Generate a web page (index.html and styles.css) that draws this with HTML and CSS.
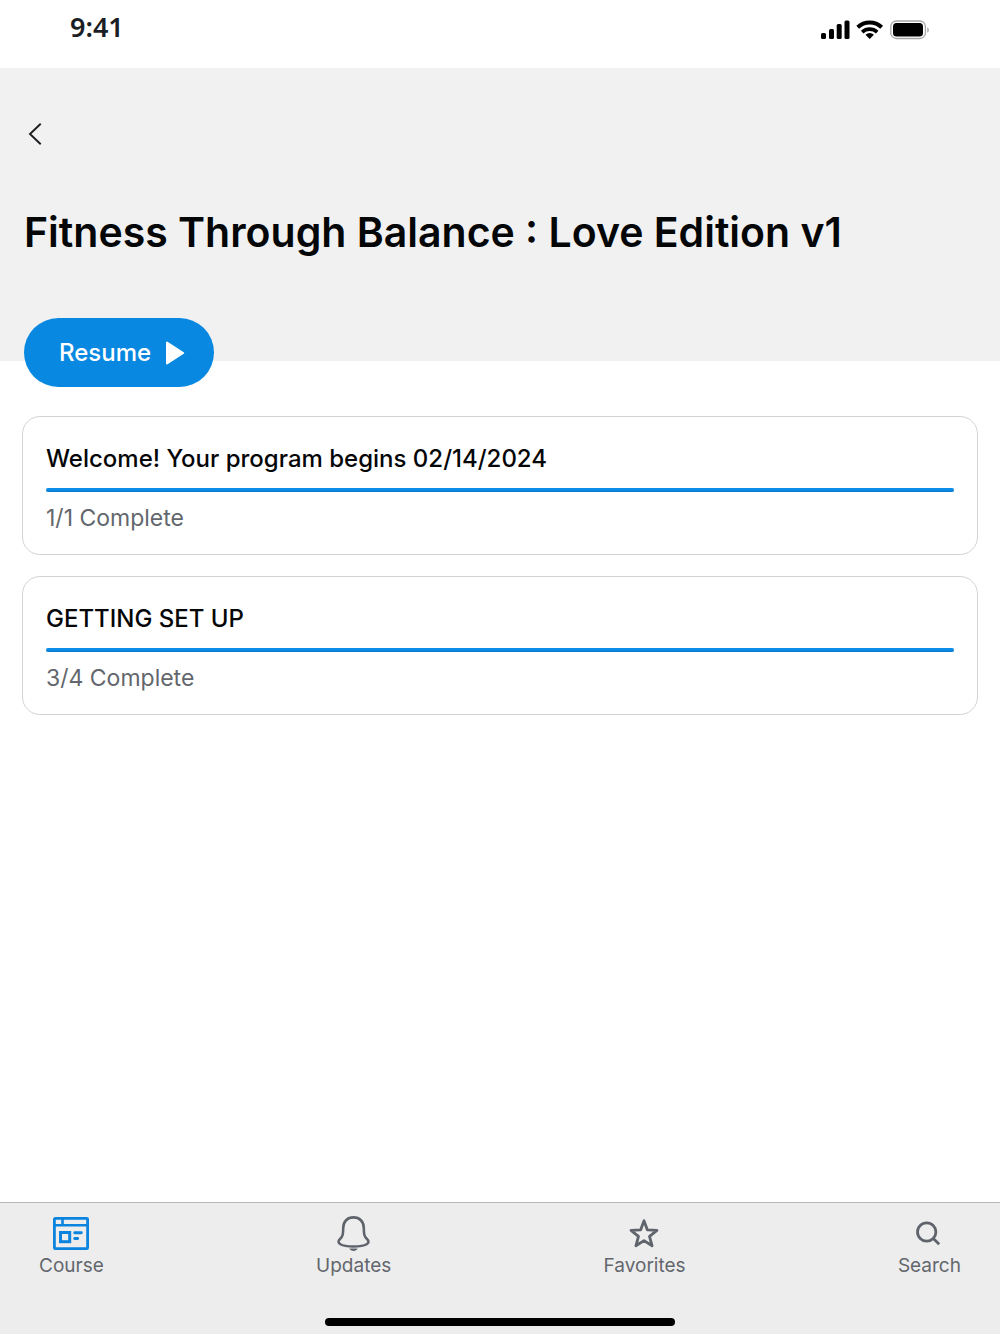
FILE: index.html
```html
<!DOCTYPE html>
<html lang="en">
<head>
<meta charset="utf-8">
<meta name="viewport" content="width=device-width, initial-scale=1">
<title>Fitness Through Balance : Love Edition v1</title>
<link rel="stylesheet" href="styles.css">
</head>
<body>
<div class="status">
  <span class="time">9:41</span>
  <svg class="indicators" width="110" height="20" viewBox="0 0 110 20" aria-hidden="true">
    <rect x="1" y="13" width="5" height="6" rx="1.5"/>
    <rect x="9" y="9" width="5" height="10" rx="1.5"/>
    <rect x="16.700" y="4" width="5" height="15" rx="1.500"/>
    <rect x="24.500" y="0.500" width="5" height="18.500" rx="1.500"/>
    <g fill="none" stroke="#000" stroke-width="4">
      <path d="M37.700 7.300a17.400 17.400 0 0 1 24 0"/>
      <path d="M42.200 12.100a11 11 0 0 1 15 0" stroke-width="3.600"/>
    </g>
    <path d="M49.700 19l-4.200-4.300a6 6 0 0 1 8.400 0z"/>
    <rect x="70.800" y="1" width="34.600" height="17.500" rx="5.500" fill="none" stroke="#a6a6a6" stroke-width="1.300"/>
    <rect x="73" y="3" width="30" height="13.500" rx="3.500"/>
    <path d="M107.300 7.500v5c2-.6 2-4.400 0-5z" fill="#a0a0a0"/>
  </svg>
</div>
<header class="hero">
  <button class="back" type="button" aria-label="Back">
    <svg width="14" height="22" viewBox="0 0 14 22" aria-hidden="true"><path d="M12.700 0.800L2 11l10.700 10.200" fill="none" stroke="#1b1d20" stroke-width="1.900"/></svg>
  </button>
  <h1 class="title">Fitness Through Balance : Love Edition v1</h1>
</header>
<main class="content">
  <button class="resume" type="button">
    <span>Resume</span>
    <svg width="20" height="24" viewBox="0 0 20 24" aria-hidden="true"><path d="M2 1.500v21L18.200 12z" fill="#fff" stroke="#fff" stroke-width="2" stroke-linejoin="round"/></svg>
  </button>
  <section class="card">
    <h2 class="card-title" id="welcome">Welcome! Your program begins 02/14/2024</h2>
    <progress class="bar" value="1" max="1" aria-labelledby="welcome"></progress>
    <p class="count">1/1 Complete</p>
  </section>
  <section class="card">
    <h2 class="card-title" id="setup">GETTING SET UP</h2>
    <progress class="bar" value="1" max="1" aria-labelledby="setup"></progress>
    <p class="count">3/4 Complete</p>
  </section>
</main>
<nav class="tabs">
  <a class="tab" href="#course">
    <svg width="36" height="36" viewBox="0 0 36 36" fill="none" stroke="#0a84de" aria-hidden="true">
      <rect x="1.400" y="3.400" width="33.200" height="30.200" rx="0.800" stroke-width="2.800"/>
      <path d="M1 10.200h34M9.500 3v7" stroke-width="2.600"/>
      <rect x="7.500" y="17.500" width="9.200" height="9.200" stroke-width="3"/>
      <path d="M21.700 17.700h6.600M21.700 23.500h3" stroke-width="2.900" stroke-linecap="round"/>
    </svg>
    <span>Course</span>
  </a>
  <a class="tab" href="#updates">
    <svg width="36" height="36" viewBox="0 0 36 36" aria-hidden="true">
      <path d="M17.500 2.400C11.500 2.400 7.200 6.500 7.200 13c0 6.500-.5 8.500-3.200 11-4.200 4 .7 7.500 13.500 7.500s17.700-3.500 13.500-7.500c-2.700-2.500-3.200-4.500-3.200-11 0-6.500-4.300-10.600-10.300-10.600z" fill="none" stroke="#5f646c" stroke-width="2.600"/>
      <path d="M13.300 33.500h8.400c-1.300 3.300-7.100 3.300-8.400 0z" fill="#5f646c"/>
    </svg>
    <span>Updates</span>
  </a>
  <a class="tab" href="#favorites">
    <svg width="36" height="36" viewBox="0 0 36 36" aria-hidden="true">
      <path d="M17 5.700l3.300 9.100 9.700.5-7.500 6 2.600 9.500L17 25.600l-8.100 5.200 2.600-9.500-7.500-6 9.700-.5z" fill="none" stroke="#5f646c" stroke-width="2.800" stroke-linejoin="round"/>
    </svg>
    <span>Favorites</span>
  </a>
  <a class="tab" href="#search">
    <svg width="36" height="36" viewBox="0 0 36 36" fill="none" stroke="#5f646c" stroke-width="2.800" aria-hidden="true">
      <circle cx="15.700" cy="17" r="9.200"/><path d="M22.300 23.600l5.900 5.700"/>
    </svg>
    <span>Search</span>
  </a>
  <span class="home"></span>
</nav>
</body>
</html>
```
FILE: styles.css
```css
* {
  box-sizing: border-box;
}

body {
  margin: 0;
  min-height: 100vh;
  display: flex;
  flex-direction: column;
  background: #fff;
  color: #050607;
  font-family: Inter, "Liberation Sans", sans-serif;
}

h1, h2, p {
  margin: 0;
}

button {
  border: 0;
  padding: 0;
  font: inherit;
  cursor: pointer;
}

.status {
  display: flex;
  justify-content: space-between;
  align-items: flex-start;
  height: 68px;
  padding: 11px 70px 0;
}

.time {
  font: 600 27px/32px "Noto Sans", sans-serif;
  color: #1b1e24;
}

.indicators {
  margin-top: 9px;
}

.hero {
  padding: 52px 24px 105px;
  background: #f1f1f1;
}

.back {
  display: flex;
  align-items: center;
  height: 28px;
  padding: 0 4px;
  background: none;
}

.title {
  margin-top: 60px;
  font-size: 41px;
  line-height: 48px;
  font-weight: 600;
}

.content {
  flex: 1;
  display: flex;
  flex-direction: column;
  align-items: stretch;
  padding: 0 22px 24px;
}

.resume {
  align-self: flex-start;
  display: flex;
  align-items: center;
  gap: 14px;
  height: 69px;
  margin: -43px 0 8px 2px;
  padding: 0 29px 0 35px;
  border-radius: 35px;
  background: #0888e1;
  color: #fff;
  font-size: 24px;
  font-weight: 500;
}

.card {
  margin-top: 21px;
  padding: 26px 23px 20px;
  border: 1px solid #d3d3d3;
  border-radius: 18px;
}

.card-title {
  font-size: 24px;
  line-height: 32px;
  font-weight: 500;
}

.bar {
  display: block;
  width: 100%;
  height: 4px;
  margin: 13px 0 10px;
  appearance: none;
  border: 0;
}

.bar::-webkit-progress-bar {
  background: #d3d3d3;
  border-radius: 2px;
}

.bar::-webkit-progress-value {
  background: linear-gradient(#0a8ee9 50%, #0872c8);
  border-radius: 2px;
}

.count {
  font-size: 23px;
  line-height: 32px;
  color: #63676d;
}

.tabs {
  position: relative;
  display: flex;
  justify-content: space-between;
  align-items: flex-start;
  height: 132px;
  padding: 12px 39px 0;
  border-top: 1px solid #b9b9b9;
  background: #ededed;
}

.tab {
  display: flex;
  flex-direction: column;
  align-items: center;
  gap: 3px;
  font-size: 19px;
  line-height: 24px;
  color: #63676d;
  text-decoration: none;
}

.home {
  position: absolute;
  bottom: 8px;
  left: 50%;
  width: 35%;
  height: 8px;
  border-radius: 4px;
  background: #000;
  transform: translateX(-50%);
}
```
